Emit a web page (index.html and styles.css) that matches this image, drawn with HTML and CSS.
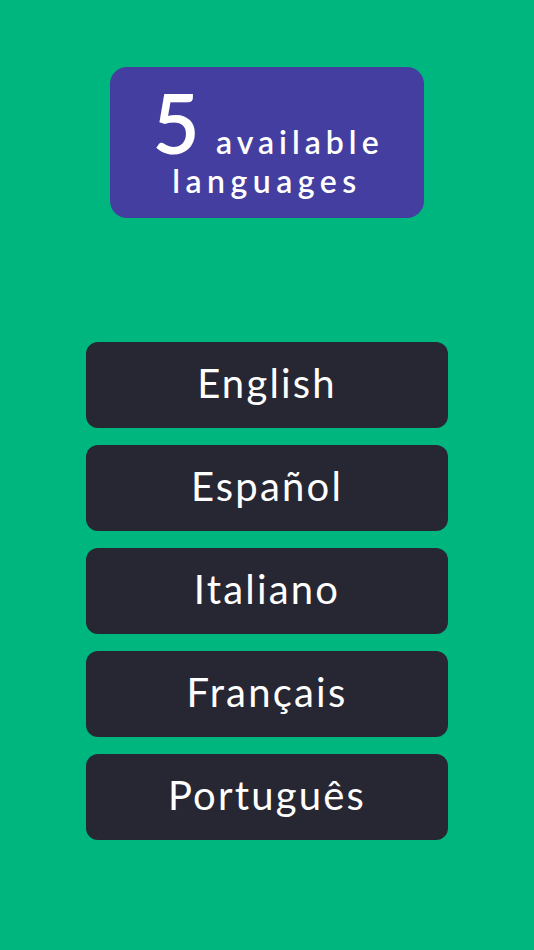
FILE: index.html
```html
<!DOCTYPE html>
<html>
<head>
<meta charset="utf-8">
<link rel="stylesheet" href="styles.css">
</head>
<body>
<main class="screen">
  <section class="badge">
    <div class="badge-line1"><span class="count">5</span><span class="label">available</span></div>
    <div class="badge-line2">languages</div>
  </section>
  <nav class="langs">
    <div class="lang">English</div>
    <div class="lang">Español</div>
    <div class="lang">Italiano</div>
    <div class="lang">Français</div>
    <div class="lang">Português</div>
  </nav>
</main>
</body>
</html>
```
FILE: styles.css
```css
html, body {
  margin: 0;
  padding: 0;
}
body {
  background: #00b67f;
  font-family: "Lato", "Noto Sans", sans-serif;
  color: #ffffff;
}
.screen {
  width: 534px;
  height: 950px;
  display: flex;
  flex-direction: column;
  align-items: center;
  padding-top: 67px;
  box-sizing: border-box;
}
.badge {
  width: 314px;
  height: 151px;
  background: #433e9f;
  border-radius: 17px;
  display: flex;
  flex-direction: column;
  align-items: center;
  box-sizing: border-box;
  padding-top: 14px;
}
.badge-line1 {
  display: flex;
  align-items: baseline;
  gap: 16px;
  line-height: 1;
  height: 72px;
  margin-left: 2px;
}
.count {
  font-size: 82px;
  font-weight: 600;
  line-height: 1;
}
.label {
  font-size: 32px;
  font-weight: 600;
  letter-spacing: 5px;
}
.badge-line2 {
  font-size: 32px;
  font-weight: 600;
  letter-spacing: 5.5px;
  line-height: 1;
  margin-top: 12px;
}
.langs {
  margin-top: 124px;
  display: flex;
  flex-direction: column;
  gap: 17px;
}
.lang {
  width: 362px;
  height: 86px;
  background: #272733;
  border-radius: 12px;
  display: flex;
  align-items: center;
  justify-content: center;
  box-sizing: border-box;
  padding-bottom: 4px;
  font-size: 40px;
  font-weight: 400;
  letter-spacing: 2.2px;
}
```
